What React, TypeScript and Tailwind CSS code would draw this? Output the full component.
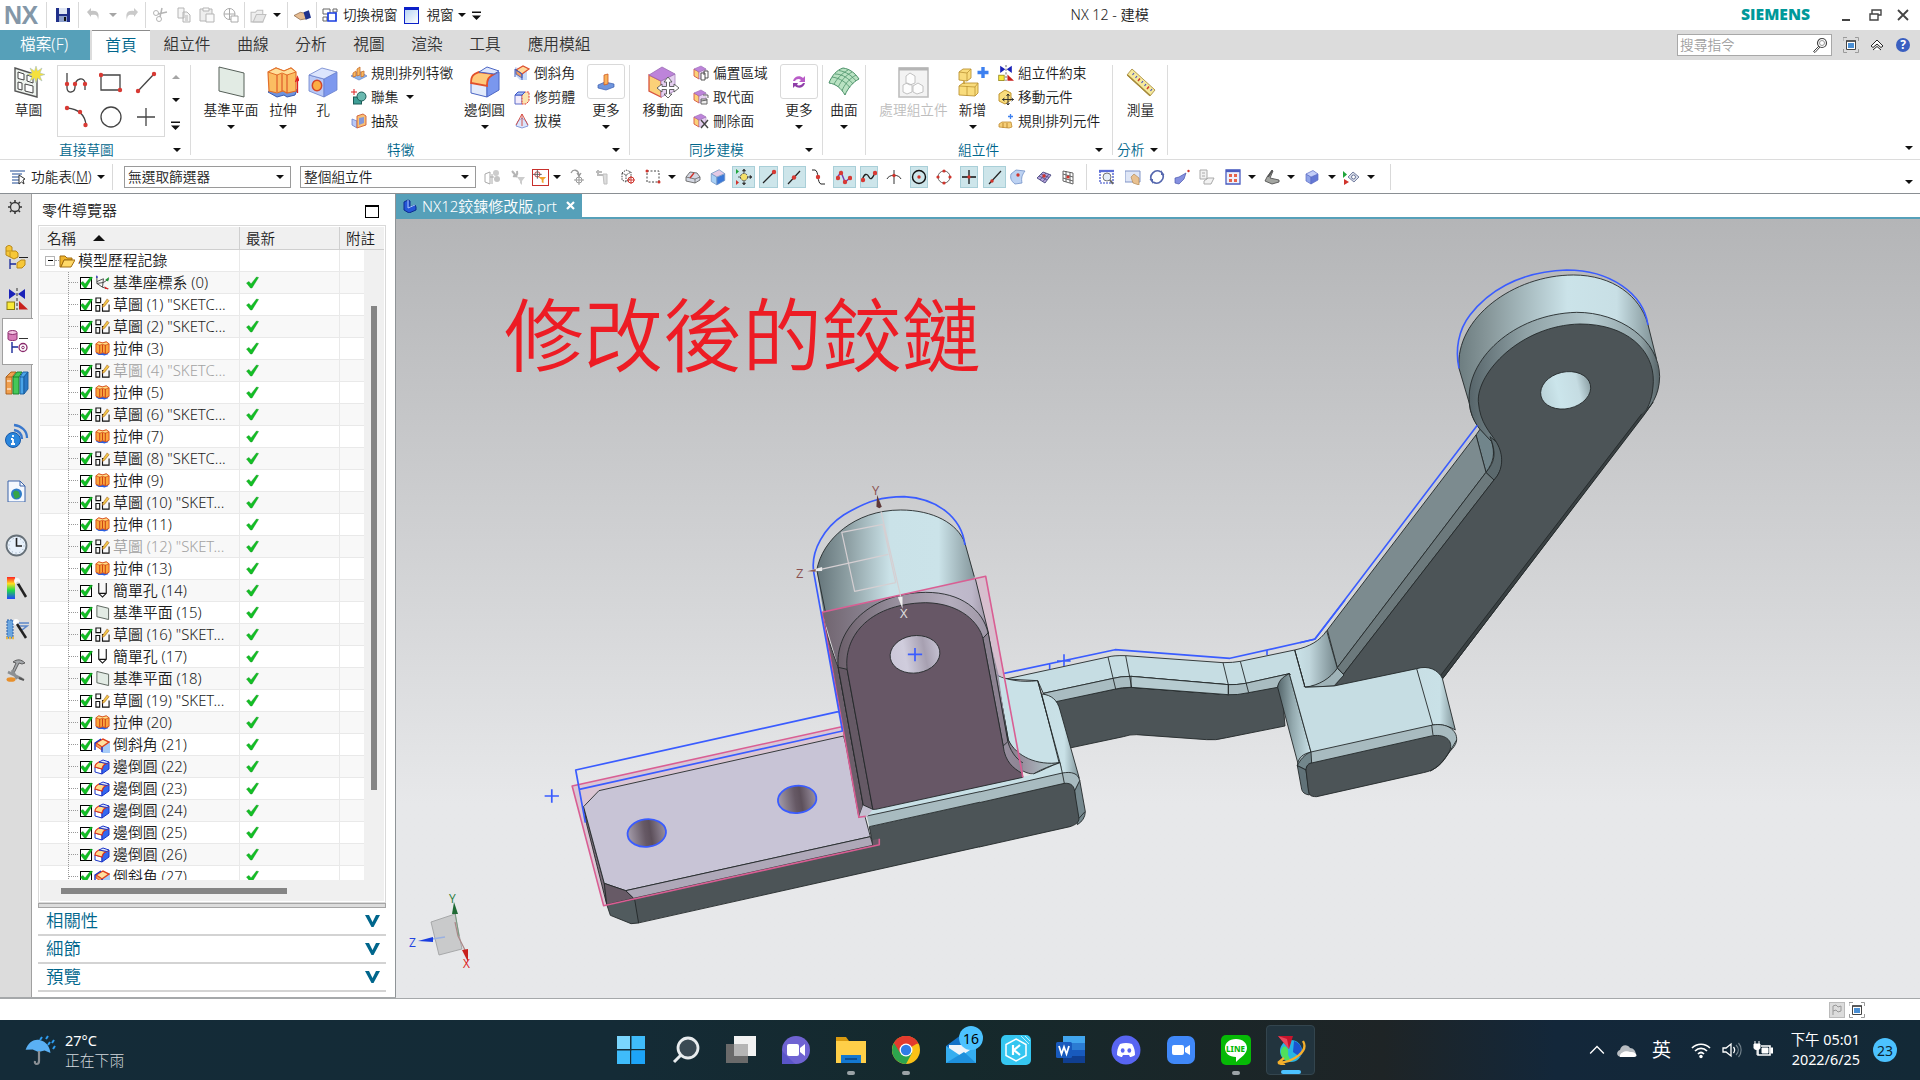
import React from "react";

type Kids = { children?: React.ReactNode };

/* ---------- small helpers ---------- */
const Arrow = ({ c = "#111", up = false }: { c?: string; up?: boolean }) => (
  <svg width="8" height="4" viewBox="0 0 8 4" className="shrink-0"><path d={up ? "M0 4H8L4 0z" : "M0 0H8L4 4z"} fill={c} /></svg>
);
const ArrowBar = () => (
  <svg width="9" height="9" viewBox="0 0 9 9" className="shrink-0"><path d="M0 .5H9V2H0zM0 4.500H9L4.500 9z" fill="#111" /></svg>
);
const Slot = ({ w, children, cls = "" }: Kids & { w: string; cls?: string }) => (
  <div className={`flex h-full shrink-0 items-center justify-center whitespace-nowrap ${w} ${cls}`}>{children}</div>
);
const Ic = ({ s = 16, vb = 16, children }: Kids & { s?: number; vb?: number }) => (
  <svg width={s} height={s} viewBox={`0 0 ${vb} ${vb}`} fill="none" className="shrink-0">{children}</svg>
);
const VSep = () => <div className="h-[26px] w-px bg-[#d9d9d9]" />;

/* ---------- ribbon icons ---------- */
const Cube = ({ s = 16, f = "#f6c944", t = "#ffe58a", r = "#d99c1c", k = "#a87312" }: { s?: number; f?: string; t?: string; r?: string; k?: string }) => (
  <Ic s={s}><path d="M2 5L7 8V15L2 12z" fill={f} stroke={k} strokeWidth=".7" /><path d="M7 8L14 5V11L7 15z" fill={r} stroke={k} strokeWidth=".7" /><path d="M2 5L9 1.500L14 5L7 8z" fill={t} stroke={k} strokeWidth=".7" /></Ic>
);
const SketchBig = () => (
  <Ic s={32} vb={32}>
    <path d="M2 2L24 9V31L2 25z" fill="#eef3ee" stroke="#555" strokeWidth="1.400" />
    <path d="M5 6L11 8V14L5 12.500zM5 16L9 17V24L5 23zM12 18L20 20V27L12 25zM14 9L20 11V17L14 15z" stroke="#444" fill="#fff" />
    <path d="M23 0L24.500 5L29 2L27 7L32 8.500L27 10L29 15L24.500 12L23 17L21.500 12L17 15L19 10L14 8.500L19 7L17 2L21.500 5z" fill="#f5e13c" stroke="#9cb8c4" strokeWidth=".5" />
  </Ic>
);
const PlaneBig = ({ s = 32 }: { s?: number }) => (
  <Ic s={s} vb={32}><path d="M4 1L29 7V31L4 25z" fill="#e2ebe4" stroke="#566059" strokeWidth={s > 20 ? 1 : 2} /></Ic>
);
const Extrude = ({ s = 32 }: { s?: number }) => (
  <Ic s={s} vb={32}>
    <path d="M1 26L10 31L17 29L20 31L28 29L30 24L22 20L8 20z" fill="#6d93e0" stroke="#3a5cb0" />
    <path d="M1 6L9 2L17 5L24 2L29 6V25L20 27L16 25L10 27L2 25z" fill="#fbbd62" stroke="#e2702a" strokeWidth="1.200" />
    <path d="M1 6L9 2L17 5L24 2L29 6L20 9L15 7L10 9z" fill="#ffdf9a" stroke="#e2702a" />
    <path d="M10 9V26M15 8V25M20 9V27" stroke="#dd5326" strokeWidth="1.100" />
    {s > 20 && <path d="M30.500 27V13M28.500 16L30.500 11L32 15" stroke="#d22" strokeWidth="1.300" />}
  </Ic>
);
const HoleBig = () => (
  <Ic s={32} vb={32}>
    <path d="M2 9L17 13V31L2 25z" fill="#b9c9f6" stroke="#6a80cc" strokeWidth=".8" /><path d="M17 13L30 6V24L17 31z" fill="#7d98ee" stroke="#6a80cc" strokeWidth=".8" />
    <path d="M2 9L15 2L30 6L17 13z" fill="#dce5fd" stroke="#6a80cc" strokeWidth=".8" /><ellipse cx="10" cy="19.500" rx="4.700" ry="5.200" fill="#fbae45" stroke="#d4472a" strokeWidth="1.500" />
  </Ic>
);
const EdgeBlend = ({ s = 32 }: { s?: number }) => (
  <Ic s={s} vb={32}>
    <path d="M2 17L18 18V31L2 27z" fill="#e3ebfb" stroke="#4c66c4" /><path d="M18 18L20 11L30 6V24L18 31z" fill="#7a97ee" stroke="#4c66c4" />
    <path d="M2 17C2 9 5 8 10 6L25 8C20 11 18 12 18 20z" fill="#ffc97a" stroke="#e2502a" strokeWidth="1.800" /><path d="M10 6L18 1L30 5L25 8z" fill="#dfe7fc" stroke="#4c66c4" />
  </Ic>
);
const Chamfer = () => (
  <Ic><path d="M1 2L13 6V15L6 15L1 10z" fill="#c8daf8" /><path d="M2 5L9 1L15 4L8 9z" fill="#ffd99a" stroke="#dd5030" strokeWidth="1.200" /><path d="M2 5L8 9V13L2 9z" fill="#ef9a5c" stroke="#4058b8" strokeWidth=".8" /><path d="M1 12V4L8 9V15" stroke="#4058b8" /></Ic>
);
const Trim = () => (
  <Ic><path d="M1 6L8 6V15H1z" fill="#f3ecfb" stroke="#5c6cc8" /><path d="M8 6L11 3H15V12L12 15H8z" fill="#fbe4b0" stroke="#d33" strokeDasharray="2 1" /><path d="M1 6L4 3H11L8 6z" fill="#a9c3f5" stroke="#3c54c8" /></Ic>
);
const Draft = () => (
  <Ic><path d="M4 8L8 5L12 8L14 13L8 15L2 13z" fill="#dbe5fc" stroke="#7288d0" strokeWidth=".8" /><path d="M8 1V13M8 1L2 12M8 1L14 12" stroke="#d2463c" strokeWidth=".9" /></Ic>
);
const PatternFeat = () => (
  <Ic><path d="M0 11L8 6L16 11L8 15z" fill="#8fb4ea" stroke="#5f7fc8" strokeWidth=".7" /><path d="M2 8L5 6V11L2 12zM6 4L9 2V10L6 11zM10 7L13 6V11L10 12z" fill="#f8b860" stroke="#c8702e" strokeWidth=".8" /></Ic>
);
const Unite = () => (
  <Ic><path d="M3 0V6M0 3H6" stroke="#d22" /><rect x="2.500" y="8" width="8" height="7" fill="#3f9f97" stroke="#1c5a56" /><circle cx="10.500" cy="7.500" r="4.500" fill="#69b9b0" stroke="#1c5a56" /></Ic>
);
const Shell = () => (
  <Ic><path d="M1 6L6 8V15L1 12z" fill="#b9c9f6" stroke="#6a80cc" strokeWidth=".8" /><path d="M6 3L12 1L15 3V12L6 15z" fill="#f8bf74" stroke="#cf5d36" strokeWidth=".9" /><path d="M8 5L13 4V10L8 12z" fill="#8497d8" /></Ic>
);
const MoreStamp = () => (
  <Ic s={18} vb={18}><path d="M1 12L8 9L17 11V14L9 17L1 15z" fill="#6f95dc" stroke="#3a5bb0" strokeWidth=".7" /><path d="M7 2L11 1V11L7 12z" fill="#f9b25c" stroke="#cf5b22" strokeWidth=".8" /></Ic>
);
const MoveFace = () => (
  <Ic s={32} vb={32}>
    <path d="M2 9L14 15V31L2 25z" fill="#fbd178" stroke="#d8543e" strokeWidth="1.300" /><path d="M14 15L28 8V25L14 31z" fill="#e5d0f0" stroke="#a884bc" strokeWidth=".8" /><path d="M2 9L15 1L28 8L14 15z" fill="#bd84da" stroke="#9a6cb4" strokeWidth=".8" />
    <path d="M21 11L25 16H22.500V20.500H27V18L32 22L27 26V23.500H22.500V28H25L21 32L17 28H19.500V23.500H15V26L10 22L15 18V20.500H19.500V16H17z" fill="#fff" stroke="#555" strokeWidth=".9" />
  </Ic>
);
const FaceSm = ({ k }: { k: number }) => (
  <Ic><path d="M1 4L6 7V14L1 11z" fill="#fbd178" stroke="#d8543e" strokeWidth=".9" /><path d="M6 7L13 4V11L6 14z" fill="#e5d0f0" stroke="#a884bc" strokeWidth=".6" /><path d="M1 4L8 1L13 4L6 7z" fill="#bd84da" stroke="#9a6cb4" strokeWidth=".6" />
    {k === 0 && <path d="M8 8H12V15H8zM11 10V6H15V13H12" fill="#fff" stroke="#444" strokeWidth=".9" />}
    {k === 1 && <path d="M8 10H14V15H8zM8 12L14 11M10 6H15V9" fill="#eee" stroke="#555" strokeWidth=".9" />}
    {k === 2 && <path d="M8 7L15 15M15 7L8 15" stroke="#444" strokeWidth="1.400" />}
  </Ic>
);
const MoreSync = () => (
  <Ic s={18} vb={18}><path d="M3 8C4 3 10 2 13 5L15 3V9H9L11 7C9 5 6 6 5 8z" fill="#b95cc8" /><path d="M15 10C14 15 8 16 5 13L3 15V10H8L7 12C9 13 12 12 13 10z" fill="#8f3ea8" /></Ic>
);
const Surface = () => (
  <Ic s={32} vb={32}><path d="M1 17C4 9 9 4 15 2C22 3 27 7 31 13C25 16 20 22 17 29C13 22 8 18 1 17z" fill="#b9e2c2" stroke="#4a9068" /><path d="M4 11C12 12 19 17 22 22M7 8C15 8 21 13 25 18M11 4.500C19 6 24 10 28 15M20 4C13 8 9 13 6 18M24 6C17 10 13 15 10.500 20.500M28 9C21 13 16 19 14 25" stroke="#4a9068" strokeWidth=".8" /></Ic>
);
const GrayAsm = () => (
  <Ic s={32} vb={32}><path d="M1 2H30V31H1z" fill="#f3f3f3" stroke="#bdbdbd" strokeWidth="1.600" /><path d="M1 3H30" stroke="#b5b5b5" strokeWidth="3" /><path d="M8 10L12 7L17 10V17L12 19L8 17zM5 19L9 17L14 19V26L9 28L5 26zM15 20L20 17L25 20V26L19 28L15 26z" fill="#fdfdfd" stroke="#bbb" strokeWidth=".9" /></Ic>
);
const AddComp = () => (
  <Ic s={32} vb={32}><path d="M2 6L6 3H14V12L10 15L2 14z" fill="#f9dc7c" stroke="#bd9434" strokeWidth=".9" /><path d="M2 6L10 7L14 3M10 7V15" stroke="#bd9434" strokeWidth=".8" /><path d="M2 20L6 17H21V27L18 30L2 29z" fill="#f9dc7c" stroke="#bd9434" strokeWidth=".9" /><path d="M2 20L18 21L21 17M18 21V30M10 20V30" stroke="#bd9434" strokeWidth=".8" /><path d="M7 15V18" stroke="#c49a30" strokeWidth="1.500" /><path d="M26 1V12M20.500 6.500H31.500" stroke="#3d80f0" strokeWidth="3.400" /></Ic>
);
const Constraint = ({ s = 16 }: { s?: number }) => (
  <Ic s={s} vb={22}><path d="M3 1L10 6L3 11zM19 1L12 6L19 11z" fill="#1a22b8" /><path d="M11 0V22" stroke="#333" strokeDasharray="3 2" /><rect x="1" y="14" width="7.500" height="7.500" fill="#f9ea3a" stroke="#8a7a10" /><path d="M13 13L22 21.500H13z" fill="#c8201c" /></Ic>
);
const MoveComp = () => (
  <Ic><path d="M1 5L7 1L13 4V11L7 15L1 12z" fill="#f9dc7c" stroke="#b98a20" strokeWidth=".9" /><path d="M10 5V16M4.500 10.500H15.500M8.500 7L10 5L11.500 7M13.500 9L15.500 10.500L13.500 12M8.500 14L10 16L11.500 14M6.500 9L4.500 10.500L6.500 12" stroke="#222" strokeWidth=".9" /></Ic>
);
const PatternComp = () => (
  <Ic><path d="M1 11L4 9L13 9L14 14L11 15L1 14z" fill="#f6cf78" stroke="#bf8a30" strokeWidth=".8" /><path d="M5 10V15M9 10V15" stroke="#bf8a30" /><path d="M12.500 1V6M10 3.500H15" stroke="#3d80f0" strokeWidth="1.300" /></Ic>
);
const Ruler = () => (
  <Ic s={30} vb={30}><path d="M6 2L29 23L24 29L1 8z" fill="#f6ea9c" stroke="#b39a50" /><path d="M1.500 8L24 28.500" stroke="#a5893a" strokeWidth="1.600" /><path d="M8 6L6.500 8M11 9L9.500 11M17 14L15.500 16M20 17L18.500 19M26 22L24.500 24" stroke="#4a56c0" strokeWidth="1.200" /><path d="M14 11.500L12 14M23 19.500L21 22" stroke="#d0402e" strokeWidth="1.500" /></Ic>
);

/* ---------- ribbon building blocks ---------- */
const Big = ({ w, icon, label, arrow, gray }: { w: string; icon: React.ReactNode; label: string; arrow?: boolean; gray?: boolean }) => (
  <div className={`flex shrink-0 flex-col items-center ${w}`}>
    <div className="flex h-[33px] items-center">{icon}</div>
    <div className={`mt-[3px] h-[18px] whitespace-nowrap text-[13.700px] leading-[18px] ${gray ? "text-[#bdbdbd]" : ""}`}>{label}</div>
    {arrow && <div className="mt-[6px] flex"><Arrow /></div>}
  </div>
);
const MoreBox = ({ children }: Kids) => (
  <div className="flex h-[35px] w-[38px] items-center justify-center rounded-[3px] border border-[#d9d9d9]">{children}</div>
);
const Row = ({ icon, label, arrow }: { icon: React.ReactNode; label: string; arrow?: boolean }) => (
  <div className="flex h-[24px] items-center gap-[4px] whitespace-nowrap text-[13.700px]">{icon}<span>{label}</span>{arrow && <span className="ml-[4px]"><Arrow /></span>}</div>
);
const Stack = ({ w, children }: Kids & { w: string }) => <div className={`-mt-[4px] flex shrink-0 flex-col ${w}`}>{children}</div>;
const Group = ({ w, label, lp = "", arrow = true, children }: Kids & { w: string; label: string; lp?: string; arrow?: boolean }) => (
  <div className={`mt-[5px] flex h-[90px] shrink-0 flex-col border-r border-[#dcdcdc] ${w}`}>
    <div className="flex h-[76px] shrink-0">{children}</div>
    <div className="flex h-[17px] shrink-0 items-center text-[13.700px] leading-[17px] text-[#00668c]">
      <span className={`whitespace-nowrap ${lp}`}>{label}</span>
      {arrow && <span className="mr-[9px] ml-auto flex"><Arrow /></span>}
    </div>
  </div>
);

/* ---------- title bar ---------- */
const TitleBar = () => (
  <div className="flex h-[30px] items-center text-[13.600px]">
    <div className="w-[46px] pl-[4px] font-['Liberation_Sans'] text-[25px] leading-[30px] font-bold tracking-[-0.500px] text-[#8497a8]">NX</div>
    <VSep />
    <Slot w="w-[31px]"><Ic><path d="M1 1H15V15H1z" fill="#20308a" /><path d="M4 1H12V7H4z" fill="#dfe6f4" /><path d="M4 9H12V15H4z" fill="#8da0cc" /><path d="M9 10H11V14H9z" fill="#111" /></Ic></Slot>
    <VSep />
    <Slot w="w-[30px]"><Ic><path d="M1 5L5 1V4C11 3 14 6 12 13C12 8 10 7 5 8V10z" fill="#c4c4c4" /></Ic></Slot>
    <Slot w="w-[8px]"><Arrow c="#a5a5a5" /></Slot>
    <Slot w="w-[28px]"><Ic><path d="M15 5L11 1V4C5 3 2 6 4 13C4 8 6 7 11 8V10z" fill="#cacaca" /></Ic></Slot>
    <VSep />
    <Slot w="w-[28px]"><Ic><circle cx="4" cy="6" r="2.500" stroke="#b5b5b5" /><circle cx="7" cy="12" r="2.500" stroke="#b5b5b5" /><path d="M6 7L15 5M8 10L10 1" stroke="#b5b5b5" strokeWidth="1.500" /></Ic></Slot>
    <Slot w="w-[20px]"><Ic><path d="M2 1H8V11H2zM7 5H11L14 8V15H7z" fill="#f5f5f5" stroke="#b5b5b5" /><path d="M9 9H12M9 11H12M9 13H12" stroke="#b5b5b5" /></Ic></Slot>
    <Slot w="w-[25px]"><Ic><path d="M1 2H13V14H1z" fill="#eee" stroke="#b5b5b5" /><path d="M4 1H10V4H4zM7 7H15V15H7z" fill="#fafafa" stroke="#b5b5b5" /></Ic></Slot>
    <Slot w="w-[23px]"><Ic><circle cx="6.500" cy="7" r="5.500" stroke="#aaa" /><path d="M6.500 1V13M1 7H12" stroke="#aaa" /><path d="M8 9H15V15H8z" fill="#fff" stroke="#aaa" /></Ic></Slot>
    <Slot w="w-[2px]" />
    <VSep />
    <Slot w="w-[27px]"><Ic s={17}><path d="M1 5H5L7 3H12V14H1z" fill="#eee" stroke="#c0c0c0" /><path d="M3 14L6 7H15L12 14z" fill="#e6e6e6" stroke="#c0c0c0" /></Ic></Slot>
    <Slot w="w-[9px]"><Arrow /></Slot>
    <Slot w="w-[6px]" />
    <VSep />
    <Slot w="w-[28px]"><Ic s={17}><path d="M0 8L6 5L11 6L12 11L6 12L3 10z" fill="#e7bd92" stroke="#7a5536" strokeWidth=".6" /><path d="M9 5L14 3L16 10L11 12z" fill="#20328c" /></Ic></Slot>
    <VSep />
    <Slot w="w-[26px]"><Ic><path d="M1 2H8V7H1zM1 10H5V14H1zM11 2H15V5H11z" stroke="#666" /><path d="M6 6H14V14H6z" fill="#fff" stroke="#1a3ee0" strokeWidth="1.700" /></Ic></Slot>
    <span className="whitespace-nowrap">切換視窗</span>
    <Slot w="w-[29px]"><div className="h-[17px] w-[15px] border border-t-[3px] border-[#0b20c8] bg-linear-to-br from-[#b8d4f4] to-white" /></Slot>
    <span>視窗</span>
    <Slot w="w-[16px]"><Arrow /></Slot>
    <Slot w="w-[13px]"><ArrowBar /></Slot>
    <span className="ml-[588px] text-[14.200px]">NX 12 - 建模</span>
    <span className="ml-auto w-[86px] font-['Open_Sans'] text-[15.700px] font-extrabold text-[#009999]">SIEMENS</span>
    <Slot w="w-[38px]"><div className="mt-[10px] h-[2px] w-[8px] bg-[#444]" /></Slot>
    <Slot w="w-[20px]"><Ic s={13} vb={13}><path d="M3 5V1H12V6H9" stroke="#444" strokeWidth="1.400" /><path d="M1 5H9V11H1z" stroke="#444" strokeWidth="1.400" /></Ic></Slot>
    <Slot w="w-[35px]"><Ic s={12} vb={12}><path d="M1 1L11 11M11 1L1 11" stroke="#444" strokeWidth="1.800" /></Ic></Slot>
  </div>
);

const FullIcon = () => (
  <Ic><path d="M0 4V.5H4M12 .5H15.500V4M15.500 12V15.500H12M4 15.500H.5V12" stroke="#9a9a9a" /><path d="M3.500 4H12.500V12.500H3.500z" fill="#fff" stroke="#444" /><path d="M3 4H13" stroke="#444" strokeWidth="1.500" /><path d="M5 6H11V11H5z" fill="#4a8fd4" /></Ic>
);

const TabBar = () => (
  <div className="flex h-[30px] items-center bg-[#dcdcdc] text-[15.700px] text-[#333]">
    <Slot w="w-[90px]" cls="bg-[#56a0b9] pr-[2px] text-white">檔案(F)</Slot>
    <div className="w-[2px]" />
    <Slot w="w-[58px]" cls="border-t border-[#8c8c8c] bg-white text-[#00668c]">首頁</Slot>
    <Slot w="w-[74px]">組立件</Slot>
    <Slot w="w-[58px]">曲線</Slot><Slot w="w-[58px]">分析</Slot><Slot w="w-[58px]">視圖</Slot><Slot w="w-[58px]">渲染</Slot><Slot w="w-[58px]">工具</Slot>
    <Slot w="w-[90px]">應用模組</Slot>
    <div className="ml-auto flex h-[22px] w-[155px] items-center border border-[#a8a8a8] bg-white pr-[3px] pl-[2px] text-[13.700px] text-[#9f9f9f]">搜尋指令
      <span className="ml-auto"><Ic><circle cx="10" cy="6" r="4.500" stroke="#444" strokeWidth="1.200" /><circle cx="10" cy="6" r="2.500" stroke="#999" /><path d="M7 9L1.500 14.500L3 15.500L8 10" stroke="#444" /></Ic></span>
    </div>
    <Slot w="w-[38px]"><FullIcon /></Slot>
    <Slot w="w-[14px]"><Ic s={14} vb={14}><path d="M1 8L7 2L13 8L11 9.500L7 6L3 9.500zM3 12L7 8.500L11 12" fill="#fff" stroke="#222" /></Ic></Slot>
    <Slot w="w-[36px]" cls="pl-[2px]"><div className="flex size-[14px] items-center justify-center rounded-full bg-[#3a5fc0] text-[12px] leading-[14px] font-bold text-white">?</div></Slot>
  </div>
);

const Dot = ({ x, y }: { x: number; y: number }) => <circle cx={x} cy={y} r="2.200" fill="#d83a34" />;

const Ribbon = () => (
  <div className="flex h-[100px] border-b border-[#dcdcdc]">
    <Group w="w-[191px]" label="直接草圖" lp="ml-[59px]">
      <Big w="w-[57px]" icon={<SketchBig />} label="草圖" />
      <div className="grid h-[72px] w-[108px] shrink-0 grid-cols-3 place-items-center border border-[#d9d9d9] pr-px pb-[2px]">
        <Ic s={24} vb={24}><path d="M3 2V17C3 23 11 22 11 16C11 6 21 6 21 12V19" stroke="#444" strokeWidth="1.300" /><Dot x={3} y={13} /><Dot x={11} y={13} /><Dot x={21} y={13} /></Ic>
        <Ic s={24} vb={24}><path d="M2 4H21V19H2z" stroke="#444" strokeWidth="1.300" /><Dot x={2} y={4} /><Dot x={21} y={19} /></Ic>
        <Ic s={24} vb={24}><path d="M4 20L20 3" stroke="#444" strokeWidth="1.300" /><Dot x={4} y={20} /><Dot x={20} y={3} /></Ic>
        <Ic s={24} vb={24}><path d="M3 3C14 4 21 10 22 20" stroke="#444" strokeWidth="1.300" /><Dot x={3} y={3} /><Dot x={16} y={7} /><Dot x={21.500} y={20} /></Ic>
        <Ic s={24} vb={24}><circle cx="12" cy="12" r="10" stroke="#444" strokeWidth="1.300" /></Ic>
        <Ic s={24} vb={24}><path d="M12 3V21M3 12H21" stroke="#444" strokeWidth="1.300" /></Ic>
      </div>
      <div className="flex w-[21px] flex-col items-center gap-[19px] pt-[10px]"><Arrow c="#a5a5a5" up /><Arrow /><ArrowBar /></div>
    </Group>
    <Group w="w-[439px]" label="特徵" lp="ml-[196px]">
      <Big w="w-[80px]" icon={<PlaneBig />} label="基準平面" arrow />
      <Big w="w-[24px]" icon={<Extrude />} label="拉伸" arrow />
      <Big w="w-[56px]" icon={<HoleBig />} label="孔" />
      <Stack w="w-[104px]"><Row icon={<PatternFeat />} label="規則排列特徵" /><Row icon={<Unite />} label="聯集" arrow /><Row icon={<Shell />} label="抽殼" /></Stack>
      <Big w="w-[59px]" icon={<EdgeBlend />} label="邊倒圓" arrow />
      <Stack w="w-[72px]"><Row icon={<Chamfer />} label="倒斜角" /><Row icon={<Trim />} label="修剪體" /><Row icon={<Draft />} label="拔模" /></Stack>
      <Big w="w-[40px]" icon={<MoreBox><MoreStamp /></MoreBox>} label="更多" arrow />
    </Group>
    <Group w="w-[193px]" label="同步建模" lp="ml-[59px]">
      <Big w="w-[66px]" icon={<MoveFace />} label="移動面" />
      <Stack w="-ml-[3px] w-[86px]"><Row icon={<FaceSm k={0} />} label="偏置區域" /><Row icon={<FaceSm k={1} />} label="取代面" /><Row icon={<FaceSm k={2} />} label="刪除面" /></Stack>
      <Big w="w-[40px]" icon={<MoreBox><MoreSync /></MoreBox>} label="更多" arrow />
    </Group>
    <Group w="w-[43px]" label="" arrow={false}><Big w="w-[42px]" icon={<Surface />} label="曲面" arrow /></Group>
    <Group w="w-[247px]" label="組立件" lp="ml-[92px]">
      <Big w="w-[95px]" icon={<GrayAsm />} label="處理組立件" gray />
      <Big w="w-[23px]" icon={<AddComp />} label="新增" arrow />
      <Stack w="w-[110px] ml-[14px]"><Row icon={<Constraint />} label="組立件約束" /><Row icon={<MoveComp />} label="移動元件" /><Row icon={<PatternComp />} label="規則排列元件" /></Stack>
    </Group>
    <Group w="w-[55px]" label="分析" lp="ml-[4px]"><Big w="w-[55px]" icon={<Ruler />} label="測量" /></Group>
    <div className="mt-[86px] mr-[7px] ml-auto"><Arrow /></div>
  </div>
);

/* ---------- selection bar ---------- */
const On = ({ children }: Kids) => <div className="flex h-[22px] w-[23px] items-center justify-center border border-[#a9cfd8] bg-[#cde5ea]">{children}</div>;
const r = "#d0342c";
const SelBar = () => (
  <div className="flex h-[34px] items-center border-b border-[#8a8f93] pt-[1px] text-[13.700px]">
    <Slot w="w-[31px]" cls="pl-[4px]"><Ic><path d="M0 2H15M2 5H12M2 8H9M2 11H9M2 14H9" stroke="#6a86b8" strokeWidth="1.400" /><path d="M9 6V15L11.500 13L14 15L13 11L15 10z" fill="#fff" stroke="#333" /></Ic></Slot>
    <span className="w-[63px] whitespace-nowrap">功能表(<u>M</u>)</span>
    <Slot w="w-[14px]"><Arrow /></Slot><Slot w="w-[4px]" />
    <VSep />
    {["無選取篩選器", "整個組立件"].map((t, i) => (
      <div key={t} className={`flex h-[22px] shrink-0 items-center border border-[#9a9a9a] pr-[6px] pl-[3px] ${i ? "ml-[9px] w-[176px]" : "ml-[11px] w-[167px]"}`}>{t}<span className="ml-auto"><Arrow /></span></div>
    ))}
    <Slot w="w-[29px]" cls="pl-[2px]"><Ic><path d="M1 5L6 3V15L1 13zM6 8H10M8 5V15" stroke="#aaa" /><circle cx="12" cy="4" r="3" fill="#ccc" /><circle cx="13" cy="10" r="3" fill="#c4c4c4" /></Ic></Slot>
    <Slot w="w-[26px]"><Ic><path d="M2 2L7 8M7 2C8 6 6 8 3 7" stroke="#b5b5b5" strokeWidth="2" /><path d="M7 8H15L12 12V16L10 14V12z" fill="#ccc" /></Ic></Slot>
    <Slot w="w-[18px]"><div className="flex size-[17px] items-center justify-center border border-[#c8302c]"><Ic s={14}><circle cx="5" cy="5" r="3" stroke="#b33" /><path d="M5 0V10M0 5H10" stroke="#555" /><path d="M6 8H15L12 11V15L10 14V11z" fill="#f2a32c" /></Ic></div></Slot>
    <Slot w="w-[16px]"><Arrow /></Slot>
    <Slot w="w-[26px]"><Ic><path d="M1 4C3 0 8 0 9 6M7 4L9 7L11 4" stroke="#999" strokeWidth="1.300" /><circle cx="9" cy="11" r="3" stroke="#999" /><path d="M9 6V16M4 11H14" stroke="#999" /></Ic></Slot>
    <Slot w="w-[24px]"><Ic><path d="M1 3H7M3 1V6H8" stroke="#bbb" strokeWidth="2" /><path d="M8 5H12V15H9z" fill="#ddd" stroke="#c0c0c0" /></Ic></Slot>
    <Slot w="w-[26px]"><Ic><path d="M2 4L6 1L11 3V9L6 13L2 11zM2 4L6 6L11 3M6 6V13" stroke="#444" strokeDasharray="1.500 1" /><circle cx="11" cy="11" r="3" stroke={r} /><path d="M11 7V15M7 11H15" stroke={r} strokeWidth=".9" /></Ic></Slot>
    <Slot w="w-[24px]"><Ic><path d="M2 2H14V13H2z" stroke="#444" strokeDasharray="2 1.500" /><circle cx="2" cy="2" r="1.500" fill={r} /><circle cx="14" cy="13" r="1.500" fill={r} /></Ic></Slot>
    <Slot w="w-[13px]"><Arrow /></Slot>
    <Slot w="w-[30px]"><Ic><path d="M1 8L5 3L12 4L15 8V11L10 14L1 12z" fill="#d3d7e2" stroke="#666" strokeWidth=".9" /><path d="M1 8L10 10L15 8M10 10V14" stroke="#666" strokeWidth=".8" /><path d="M9 4L5 9" stroke={r} strokeWidth="1.400" /></Ic></Slot>
    <Slot w="w-[20px]"><Cube f="#a9d0f4" t="#e3c9e4" r="#3a78d8" k="#7496c4" s={18} /></Slot>
    <Slot w="w-[31px]"><On><Ic><path d="M8 1V15M2 8H15M8 0L6.500 2H9.500zM8 16L6.500 14H9.500zM16 8L14 6.500V9.500z" stroke="#333" strokeWidth=".8" fill="#333" /><circle cx="8" cy="8" r="3.600" fill="#f4e06a" stroke="#555" strokeDasharray="2 1" /><path d="M0 0V5L3 2.500z" fill="#1fa53a" /><path d="M0 11V16L3 13.500z" fill={r} /></Ic></On></Slot>
    <Slot w="w-[19px]"><On><Ic><path d="M2 14L13 3" stroke="#222" strokeWidth="1.200" /><Dot x={13} y={3} /></Ic></On></Slot>
    <Slot w="w-[32px]"><On><Ic><path d="M2 15L14 2" stroke="#222" strokeWidth="1.200" /><Dot x={8} y={8.5} /></Ic></On></Slot>
    <Slot w="w-[17px]"><Ic><path d="M1 1H4C8 2 6 14 10 15H14" stroke="#222" /><Dot x={7} y={8} /></Ic></Slot>
    <Slot w="w-[34px]"><On><Ic><path d="M1 9L5 3L9 13L14 9" stroke="#7a3ab0" strokeWidth="1.400" /><Dot x={5} y={4} /><Dot x={9} y={13} /><Dot x={14} y={9} /><Dot x={2} y={9} /></Ic></On></Slot>
    <Slot w="w-[15px]"><On><Ic><path d="M1 12C3 4 6 4 8 8S12 8 14 4" stroke="#222" strokeWidth="1.400" /><Dot x={2} y={11} /><Dot x={14} y={4} /></Ic></On></Slot>
    <Slot w="w-[35px]"><Ic><path d="M8 1V15M1 10C3 5 13 5 15 10" stroke="#333" /><circle cx="8" cy="6.500" r="1.700" fill={r} /></Ic></Slot>
    <Slot w="w-[15px]"><On><Ic><circle cx="8" cy="8" r="6.500" stroke="#111" strokeWidth="1.400" /><circle cx="8" cy="8" r="1.700" fill={r} /></Ic></On></Slot>
    <Slot w="w-[36px]"><Ic><circle cx="8" cy="8" r="6" stroke="#666" /><circle cx="8" cy="2" r="1.600" fill={r} /><circle cx="8" cy="14" r="1.600" fill={r} /><circle cx="2" cy="8" r="1.600" fill={r} /><circle cx="14" cy="8" r="1.600" fill={r} /></Ic></Slot>
    <Slot w="w-[14px]"><On><Ic><path d="M8 1V15M1 8H15" stroke="#111" strokeWidth="1.300" /><circle cx="8" cy="8" r="1.700" fill={r} /></Ic></On></Slot>
    <Slot w="w-[37px]"><On><Ic><path d="M2 15L14 2" stroke="#222" strokeWidth="1.200" /><circle cx="5" cy="12" r="1.700" fill={r} /></Ic></On></Slot>
    <Slot w="w-[10px]"><Ic><path d="M1 5L6 1L15 2C12 6 11 9 12 14L5 15C1 12 0 9 1 5z" fill="#bdd2f2" stroke="#7c98cc" strokeWidth=".9" /><circle cx="8" cy="6" r="1.700" fill={r} /></Ic></Slot>
    <Slot w="w-[41px]"><Ic><path d="M1 9L7 3L15 6L9 14z" fill="#b6a3dc" stroke="#4a4a80" strokeWidth=".9" /><path d="M3 7L11 11M5 5L13 8.500M4 11L10 4M7 12.500L13 5" stroke="#4a4a80" strokeWidth=".8" /><circle cx="8" cy="7" r="1.700" fill={r} /></Ic></Slot>
    <Slot w="w-[8px]"><Ic><path d="M3 2L13 4V15L3 12zM6 2V13M10 3V14M3 5L13 8M3 9L13 12" stroke="#555" strokeWidth=".9" /><circle cx="8" cy="8" r="1.600" fill={r} /></Ic></Slot>
    <Slot w="w-[14px]" />
    <VSep />
    <Slot w="w-[40px]"><Ic><path d="M1 2H14V14H1z" stroke="#3346c8" strokeWidth="1.200" strokeDasharray="2 1" /><path d="M0 2H15" stroke="#5a6cd8" strokeWidth="2.300" /><circle cx="8" cy="8" r="4" fill="#e6eef8" stroke="#777" /><path d="M11 11L14 15" stroke="#666" strokeWidth="2" /></Ic></Slot>
    <Slot w="w-[12px]"><Ic><path d="M0 2H15V13H0z" fill="#dfe6f6" stroke="#8195c8" /><path d="M6 8L9 5L14 9V16L8 14z" fill="#e9c190" stroke="#a97f48" strokeWidth=".6" /></Ic></Slot>
    <Slot w="w-[36px]"><Ic><path d="M3 12A6.500 6.500 0 0 1 12 3M13 4A6.500 6.500 0 0 1 4 13" stroke="#5567ae" strokeWidth="1.600" /><path d="M12 1V6L15.500 6zM4 15V10L.5 10z" fill="#5567ae" /></Ic></Slot>
    <Slot w="w-[14px]"><Ic><path d="M1 9L5 8L12 4L10 10L5 15L1 14z" fill="#8590e0" stroke="#4c58ac" strokeWidth=".7" /><circle cx="14.500" cy="2" r="1.200" fill={r} /></Ic></Slot>
    <Slot w="w-[36px]"><Ic><path d="M1 1H8V10H1zM5 12L9 9H15L12 15H5z" fill="#f2f2f2" stroke="#aaa" /><path d="M3 4H6M3 7H6" stroke="#aaa" /></Ic></Slot>
    <Slot w="w-[16px]"><Ic><path d="M1 1H15V15H1z" fill="#eef1fb" stroke="#4a5cc0" strokeWidth="1.300" /><path d="M1 2H15" stroke="#4a5cc0" strokeWidth="2.300" /><path d="M4 5H7V8H4zM9 5H12V8H9zM4 10H7V13H4zM9 10H12V13H9z" fill="#e5634c" /></Ic></Slot>
    <Slot w="w-[22px]"><Arrow /></Slot>
    <Slot w="w-[17px]"><Ic><path d="M3 8L8 1L9 2L6 9L15 11V13L8 15L1 12z" fill="#a3a5a1" stroke="#555" strokeWidth=".9" /><path d="M3 8L8 1L9 2L5 8z" fill="#555" /></Ic></Slot>
    <Slot w="w-[21px]"><Arrow /></Slot>
    <Slot w="w-[22px]"><Cube f="#8fa4e8" t="#c3cef8" r="#6478d4" k="#5c6cc4" /></Slot>
    <Slot w="w-[17px]"><Arrow /></Slot>
    <Slot w="w-[22px]"><Ic><path d="M0 2V9L4 5.500z" fill="#1fa53a" /><path d="M1 10V16L6 13z" fill={r} /><path d="M5 8L10 3L16 8L11 13z" fill="#d8dde8" stroke="#6a7498" strokeWidth=".9" /><circle cx="10.500" cy="8" r="2" fill="#fff" stroke="#6a7498" /></Ic></Slot>
    <Slot w="w-[17px]"><Arrow /></Slot>
    <Slot w="w-[11px]" /><VSep />
    <div className="mt-[10px] mr-[7px] ml-auto"><Arrow /></div>
  </div>
);

/* ---------- resource bar ---------- */
const ResourceBar = () => (
  <div className="flex w-[32px] flex-col items-center border-r border-[#a0a0a0] bg-[#dcdcdc] pl-[2px] [&>svg]:shrink-0">
    <div className="flex h-[40px] items-center pr-[3px] pb-[14px]"><Ic s={14} vb={14}><circle cx="7" cy="7" r="4.500" stroke="#333" strokeWidth="1.300" /><path d="M7 0V2M7 12V14M0 7H2M12 7H14M2 2L3.500 3.500M10.500 10.500L12 12M12 2L10.500 3.500M2 12L3.500 10.500" stroke="#333" strokeWidth="1.500" /></Ic></div>
    <div className="flex h-[46px] items-center"><Ic s={24} vb={24}><path d="M1 2L4 0L7 2V6L11 6L13 8V12L9 14L5 12L1 10z" fill="#f6c738" stroke="#b88818" /><path d="M1 6L7 6M5 7V12" stroke="#b88818" strokeWidth=".8" /><path d="M5 14V24M5 19H11" stroke="#1a2a9a" strokeWidth="1.300" /><path d="M14 12.500H23" stroke="#222" /><path d="M12 18L16 15H20V20L17 23H12z" fill="#f6c738" stroke="#b88818" /></Ic></div>
    <div className="flex h-[38px] items-center"><Constraint s={22} /></div>
    <div className="-mr-px flex h-[47px] w-[31px] shrink-0 items-center justify-center border border-r-0 border-[#a0a0a0] bg-white pb-[2px]"><Ic s={24} vb={24}><path d="M2 4V10C2 12 11 12 11 10V4z" fill="#d77cb8" stroke="#8a2a6c" /><ellipse cx="6.500" cy="3.500" rx="4.500" ry="2" fill="#f3c4e2" stroke="#8a2a6c" /><path d="M6 13V24M6 18H12" stroke="#1a2a9a" strokeWidth="1.400" /><path d="M13 9.500H22" stroke="#333" /><circle cx="17" cy="18.500" r="4" fill="#fff" stroke="#8a2a6c" strokeWidth="1.300" /><circle cx="17" cy="18.500" r="1.300" stroke="#8a2a6c" /></Ic></div>
    <div className="flex h-[36px] items-center"><Ic s={24} vb={24}><path d="M1 6H7V23H1zM1 6L6 1H11L7 6" fill="#f0a050" stroke="#a85a14" strokeWidth=".9" /><path d="M8 6H14V23H8zM8 6L12 1H17L14 6" fill="#45c858" stroke="#157a24" strokeWidth=".9" /><path d="M15 6H19V23H15zM15 6L18 1H23L19 6" fill="#4aa4e8" stroke="#165c9c" strokeWidth=".9" /><path d="M19 6L23 1V18L19 23z" fill="#2a78c4" stroke="#165c9c" strokeWidth=".9" /><path d="M2 10H6M2 18H6" stroke="#fff" /></Ic></div>
    <div className="flex h-[69px] items-center"><Ic s={25} vb={25}><circle cx="9" cy="17" r="7.500" fill="#2a86dc" stroke="#1658a8" /><path d="M9 12V14M9 16V21M7 21H11M7 16H9" stroke="#fff" strokeWidth="1.800" /><path d="M10 7C15 8 18 11 18 16M10 2C18 3 23 8 23 15" stroke="#3a78cc" strokeWidth="2.300" /></Ic></div>
    <div className="flex h-[42px] items-center"><Ic s={22} vb={22}><path d="M2 1H14L19 6V22H2z" fill="#f4f8fe" stroke="#3a62a8" /><path d="M14 1V6H19" stroke="#3a62a8" /><circle cx="10.500" cy="14" r="5.500" fill="#2f7cc8" /><path d="M7 13C9 9 11 11 13 12L14 17L9 19z" fill="#36a548" /></Ic></div>
    <div className="flex h-[66px] items-center"><Ic s={23} vb={23}><circle cx="11.500" cy="11.500" r="10" fill="#e8f1fb" stroke="#667078" strokeWidth="1.800" /><circle cx="11.500" cy="11.500" r="7.500" stroke="#8aa0b8" strokeDasharray="1 2.900" /><path d="M11.500 4V12H17" stroke="#222" strokeWidth="1.600" /></Ic></div>
    <div className="flex h-[20px] items-center"><svg width="22" height="24" viewBox="0 0 22 24"><defs><linearGradient id="rb" x1="0" y1="0" x2="0" y2="1"><stop offset="0" stopColor="#f22" /><stop offset=".3" stopColor="#fd2" /><stop offset=".6" stopColor="#2d4" /><stop offset="1" stopColor="#24f" /></linearGradient></defs><path d="M1 1H9V23H1z" fill="url(#rb)" /><path d="M11 6L20 21" stroke="#222" strokeWidth="2.500" /><circle cx="11" cy="5" r="3" fill="#fff" opacity=".8" /></svg></div>
    <div className="mt-[20px] flex h-[24px] items-center"><Ic s={24} vb={24}><path d="M2 2H8V20H2z" fill="#6aa6e0" stroke="#2a5fa8" strokeDasharray="2 1" /><path d="M11 5H24M13 8H22L17 12" stroke="#5c86c8" strokeWidth="1.600" /><circle cx="11" cy="4" r="3" fill="#fff" opacity=".9" /><path d="M12 6L21 20" stroke="#222" strokeWidth="2.500" /><path d="M1 20H9" stroke="#e8b848" strokeWidth="2.500" strokeDasharray="2 1" /></Ic></div>
    <div className="mt-[17px] flex h-[24px] items-center"><Ic s={24} vb={24}><path d="M8 3C12 0 16 0 20 4L17 5L14 4L9 14L7 13L11 4z" fill="#a4a7aa" stroke="#555" strokeWidth=".9" /><path d="M3 13L17 20M7 11L12 20" stroke="#8c8f92" strokeWidth="2.600" /><path d="M14 19L19 21" stroke="#555" strokeWidth="2" /><ellipse cx="6" cy="20.500" rx="4.500" ry="2.300" fill="#e8902c" /></Ic></div>
  </div>
);

/* ---------- part navigator ---------- */
type K = "csys" | "sk" | "ex" | "hole" | "pl" | "ch" | "bl";
const rows: [K, string, boolean?][] = [
  ["csys", "基準座標系 (0)"], ["sk", '草圖 (1) "SKETC...'], ["sk", '草圖 (2) "SKETC...'], ["ex", "拉伸 (3)"], ["sk", '草圖 (4) "SKETC...', true],
  ["ex", "拉伸 (5)"], ["sk", '草圖 (6) "SKETC...'], ["ex", "拉伸 (7)"], ["sk", '草圖 (8) "SKETC...'], ["ex", "拉伸 (9)"], ["sk", '草圖 (10) "SKET...'],
  ["ex", "拉伸 (11)"], ["sk", '草圖 (12) "SKET...', true], ["ex", "拉伸 (13)"], ["hole", "簡單孔 (14)"], ["pl", "基準平面 (15)"], ["sk", '草圖 (16) "SKET...'],
  ["hole", "簡單孔 (17)"], ["pl", "基準平面 (18)"], ["sk", '草圖 (19) "SKET...'], ["ex", "拉伸 (20)"], ["ch", "倒斜角 (21)"], ["bl", "邊倒圓 (22)"],
  ["bl", "邊倒圓 (23)"], ["bl", "邊倒圓 (24)"], ["bl", "邊倒圓 (25)"], ["bl", "邊倒圓 (26)"], ["ch", "倒斜角 (27)"],
];
const TreeIcon = ({ k }: { k: K }) => {
  if (k === "ex") return <Ic s={15}><path d="M1 13L4 15H8L10 15.500L14 14V11H2z" fill="#2a5fe0" /><path d="M1 3L4 1L8 2L12 1L15 3V12L12 13.500L8 12.500L5 13.500L1 12z" fill="#fba63c" stroke="#d8501c" /><path d="M1 3L4 1L8 2L12 1L15 3L11 4.500L8 3.500L5 4.500z" fill="#ffe08a" stroke="#d8501c" strokeWidth=".8" /><path d="M5 4V13M8 4V12M11 4V13" stroke="#c83c14" /></Ic>;
  if (k === "bl") return <Ic s={16}><path d="M1 8L8 10V15L1 13z" fill="#fff" stroke="#1a34c8" /><path d="M8 10L10 6L15 3V10L8 15z" fill="#3468f0" stroke="#1a34c8" /><path d="M1 8C1 5 3 4 5 3L13 4.500C10 5.500 9 6 8 10z" fill="#ffdc8c" stroke="#e0361c" strokeWidth="1.200" /><path d="M5 3L9 1L15 3L13 4.500z" fill="#dfe9ff" stroke="#1a34c8" /></Ic>;
  if (k === "ch") return <Ic s={16}><path d="M5 8L16 4V16H8z" fill="#a8ccf8" /><path d="M2 6L9 2L15 5L8 10z" fill="#ffe0a0" stroke="#e0401c" strokeWidth="1.400" /><path d="M2 6L8 10V13L2 9z" fill="#f0a060" stroke="#e0401c" strokeWidth=".9" /><path d="M1 13V6L7 2M8 10V15" stroke="#1a34c8" strokeWidth="1.400" /></Ic>;
  if (k === "pl") return <PlaneBig s={15} />;
  if (k === "hole") return <Ic s={15}><path d="M4 0V11L8 15L12 11V0M4 11H12" stroke="#111" strokeWidth="1.200" /></Ic>;
  if (k === "csys") return <Ic s={15}><path d="M2 1V9L8 13L9 4L2 7M8 13L14 15M9 8L15 4M2 9L9 8" stroke="#333" strokeWidth=".9" /><path d="M11 5L15 2L14 7z" fill="#1f9a34" /><path d="M10 12L15 15L11 15z" fill="#d22" /><path d="M1 3L2 0L3 3z" fill="#22c" /></Ic>;
  return <Ic s={15}><path d="M1 1H6V6H1zM1 9H5V15H1zM11 8H8V15H15V8" stroke="#111" strokeWidth="1.200" /><path d="M8 9L13 2L15 4L10 10L8 11z" fill="#f2c848" stroke="#a05a20" strokeWidth=".6" /></Ic>;
};
const Check = () => <Ic s={13} vb={13}><path d="M.5 7L3 5.500L5 8L10.500 1L12.500 1.500L6 12H4.500z" fill="#12c024" stroke="#0c8c18" strokeWidth=".4" /></Ic>;

const Navigator = () => (
  <div className="flex w-[363px] shrink-0 flex-col pr-[9px] pl-[6px]">
    <div className="flex h-[31px] items-center pt-[2px] pr-[7px] pl-[4px] text-[15px]">零件導覽器<div className="mt-px ml-auto h-[13px] w-[14px] border border-t-2 border-black" /></div>
    <div className="flex h-[678px] flex-col border border-[#d9d9d9] p-px">
      <div className="flex h-[23px] shrink-0 border-b border-[#cfcfcf] bg-[#f0f0f0] text-[14.500px] leading-[23px]">
        <div className="flex w-[200px] items-center border-r border-[#cfcfcf] pl-[7px]">名稱<span className="ml-[17px]"><svg width="12" height="6" viewBox="0 0 12 6"><path d="M0 6H12L6 0z" fill="#111" /></svg></span></div>
        <div className="w-[100px] border-r border-[#cfcfcf] pl-[6px]">最新</div>
        <div className="pl-[6px]">附註</div>
      </div>
      <div className="flex h-[630px] shrink-0">
        <div className="w-[324px] overflow-hidden text-[14.900px]">
          <div className="flex h-[22px] border-b border-[#e9e9e9]">
            <div className="flex w-[200px] items-center border-r border-[#e9e9e9] pl-[5px]">
              <div className="flex size-[10px] items-center justify-center border border-[#b5b5b5]"><div className="h-px w-[5px] bg-black" /></div>
              <div className="w-[4px] border-t border-dotted border-[#999]" />
              <Ic s={16}><path d="M1 3H6L8 5H13V7H5L2 14H1z" fill="#f0b52c" stroke="#a06c10" /><path d="M5 7H16L12 14H2z" fill="#ffd968" stroke="#a06c10" /></Ic>
              <span className="ml-[3px] leading-[21px]">模型歷程記錄</span>
            </div>
            <div className="w-[100px] border-r border-[#e9e9e9]" />
          </div>
          {rows.map(([k, t, gray], i) => (
            <div key={i} className={`flex h-[22px] border-b border-[#e9e9e9] ${i % 2 ? "bg-white" : "bg-[#f8f8f8]"}`}>
              <div className="flex w-[200px] items-center border-r border-[#e9e9e9] pl-[28px]">
                <div className="flex h-full w-[12px] shrink-0 items-center border-l border-dotted border-[#999]"><div className="w-[9px] border-t border-dotted border-[#999]" /></div>
                <div className="flex size-[12px] shrink-0 items-center justify-center border border-black bg-white"><Check /></div>
                <div className="ml-[2px] flex w-[16px] shrink-0 justify-center"><TreeIcon k={k} /></div>
                <span className={`ml-[3px] leading-[21px] whitespace-nowrap ${gray ? "text-[#a3a3a3]" : ""}`}>{t}</span>
              </div>
              <div className="flex w-[100px] items-center border-r border-[#e9e9e9] pl-[6px]"><Check /></div>
            </div>
          ))}
        </div>
        <div className="flex flex-1 justify-center bg-[#f0f0f0] pt-[56px]"><div className="mr-px h-[484px] w-[6px] bg-[#858585]" /></div>
      </div>
      <div className="flex-1 bg-[#f0f0f0] pt-[8px] pl-[21px]"><div className="h-[6px] w-[226px] bg-[#858585]" /></div>
    </div>
    <div className="h-[5px] border border-[#a5a5a5] bg-[#dcdcdc]" />
    {["相關性", "細節", "預覽"].map((t) => (
      <div key={t} className="flex h-[28px] items-center border-b-2 border-[#d3d3d3] pr-[6px] pl-[8px] text-[17.400px] leading-[24px] text-[#00668c]"><span className="-mt-[2px]">{t}</span>
        <span className="ml-auto"><svg width="15" height="12" viewBox="0 0 15 12"><path d="M0 0H4L7.500 7L11 0H15L8.500 12H6.500z" fill="#00668c" /></svg></span></div>
    ))}
  </div>
);

/* ---------- 3D model ---------- */
const Stops = ({ id, s, v }: { id: string; s: [number, string][]; v?: boolean }) => (
  <linearGradient id={id} x1="0" y1="0" x2={v ? "0" : "1"} y2={v ? "1" : "0"}>{s.map(([o, c]) => <stop key={o} offset={o} stopColor={c} />)}</linearGradient>
);
const Model = () => (
  <svg width="1524" height="779" viewBox="396 219 1524 779" fill="none" className="block [&_*]:[vector-effect:non-scaling-stroke]">
    <defs>
      <Stops id="cylR" s={[[0, "#6d7d80"], [0.15, "#87979a"], [0.55, "#cbe3e9"], [0.8, "#c8dfe5"], [1, "#7b8d91"]]} />
      <Stops id="chR" s={[[0, "#57656a"], [0.3, "#90a2a6"], [0.65, "#b4c9ce"], [0.9, "#8fa1a5"], [1, "#566367"]]} />
      <Stops id="cylL" s={[[0, "#65757a"], [0.2, "#8fa1a5"], [0.45, "#cae2e8"], [0.75, "#cbe3e9"], [1, "#7c8d92"]]} />
      <Stops id="cylP" s={[[0, "#70646f"], [0.3, "#8c8593"], [0.6, "#c5c0d1"], [0.9, "#bdb7c9"], [1, "#9a91a2"]]} />
      <Stops id="bandP" s={[[0, "#6b5f6a"], [0.3, "#958d9b"], [0.6, "#b4adbd"], [1, "#8c8392"]]} />
      <Stops id="bore" s={[[0, "#a59dab"], [0.45, "#665965"], [0.6, "#5d505b"], [1, "#9a90a0"]]} />
      <Stops id="boreP" s={[[0, "#cbc7d8"], [0.3, "#d0cddd"], [0.7, "#a7a0b1"], [1, "#c5c1d2"]]} />
      <Stops id="boreR" s={[[0, "#b9d1d7"], [0.35, "#cbe5eb"], [0.75, "#c5dce2"], [1, "#8da1a6"]]} />
      <Stops id="fil" s={[[0, "#cbe3e9"], [0.35, "#c0d6dc"], [1, "#74868b"]]} />
      <Stops id="side" s={[[0, "#54656a"], [0.45, "#93a9ae"], [1, "#cbe3e9"]]} />
      <Stops id="rnd" s={[[0, "#c8dfe5"], [0.6, "#c9e1e7"], [1, "#7e9297"]]} />
      <Stops id="foot" s={[[0, "#766a78"], [0.45, "#9b94a2"], [0.8, "#a9bcc1"], [1, "#c2d9df"]]} />
    </defs>

    {/* long arm */}
    <g transform="translate(1300 240) scale(.33333)" stroke="#24292a" strokeWidth=".9" strokeLinejoin="round">
      <path d="M508 490L477 385C465 235 640 105 820 105C940 105 1020 170 1043 250L1069 355L900 600L575 610C545 570 512 545 508 490z" fill="url(#cylR)" />
      <path d="M508 490C495 360 640 222 830 217C960 217 1078 300 1079 410C1078 470 1050 500 1030 525L800 700L590 700L575 605C545 575 515 550 508 490z" fill="url(#chR)" />
      <path d="M540 568L575 605C585 640 582 665 558 697L528 585z" fill="#71858b" />
      <path d="M528 585L558 697L112 1283L82 1170z" fill="#7c8b8f" />
      <path d="M558 697L582 720L130 1303L112 1283z" fill="#6c797c" />
      <path d="M570 590C590 640 585 665 558 697L582 720C610 690 615 650 592 608z" fill="#5b696d" />
      <path d="M535 485C530 400 660 256 840 252C980 252 1062 330 1060 425C1058 470 1050 495 1028 528L428 1316L105 1338L130 1303L582 720C610 690 612 645 590 608C570 575 540 550 535 485z" fill="#4c5457" />
      <path d="M1060 486L1030 528L428 1316L422 1306L1025 522" fill="#3a4143" />
      <ellipse cx="797" cy="451" rx="76" ry="55" transform="rotate(-13 797 451)" fill="url(#boreR)" />
      <g stroke="#3a5cff" strokeWidth="1.600"><path d="M477 385C465 330 475 270 510 225C560 160 650 95 800 90C930 90 1030 160 1044 255" /><path d="M532 556L45 1197L0 1208" /></g>
    </g>

    {/* link and block */}
    <g transform="translate(980 600) scale(.33333)" stroke="#24292a" strokeWidth=".9" strokeLinejoin="round">
      <path d="M944 150C990 140 1020 122 1040 92L1072 205C1050 240 1010 260 975 262z" fill="url(#fil)" />
      <path d="M1072 205L1092 225L1062 258L975 262C1020 255 1050 235 1072 205z" fill="#9fb3b8" />
      <path d="M220 305L407 267L453 262L745 284L806 278L905 255L915 378L740 413Q705 422 680 419L470 404Q450 403 430 410L265 445z" fill="#4c5457" />
      <path d="M78 237L384 171Q400 166 437 167L729 188Q760 188 781 184L944 150L975 262L928 221L797 250Q770 255 745 254L453 229Q420 229 400 235L190 280L173 242z" fill="#c6dde3" />
      <path d="M190 280L400 235Q420 229 453 229L745 254Q770 255 797 250L928 221C905 235 895 250 893 262L806 278Q770 286 745 284L453 262Q425 262 407 267L228 305z" fill="#a9bcc1" />
      <path d="M453 229L745 254V284L453 262z" fill="#b6cbd0" />
      <path d="M384 171L407 267M437 167L455 262M729 188L745 254M781 184L806 278M745 254V284M944 150L975 262" />
      <path d="M893 262C895 245 905 232 928 221L993 456L955 495z" fill="url(#side)" />
      <path d="M973 262L1062 258L1310 206L1358 375L993 456L928 221z" fill="#c6dde3" stroke="none" />
      <path d="M928 221L993 456M975 262L1062 258L1310 206" />
      <path d="M970 258L933 225" stroke="#c6dde3" strokeWidth="1.800" />
      <path d="M1310 206C1345 195 1375 210 1387 235L1426 390C1400 375 1380 372 1358 375z" fill="url(#rnd)" />
      <path d="M952 497C955 470 970 462 993 456L1358 375C1400 368 1432 390 1430 420C1428 440 1412 450 1395 470L1000 560z" fill="#a8bbc0" />
      <path d="M952 497C960 480 975 462 993 456L995 489C980 492 978 505 978 510z" fill="#72868b" />
      <path d="M952 497L978 510L988 585Q968 582 965 568z" fill="#617278" />
      <path d="M978 510C980 495 985 491 995 489L1358 407C1400 402 1422 425 1408 455C1388 490 1370 510 1330 518L1010 590C990 590 988 585 985 570z" fill="#4c5457" />
      <path d="M1355 375L1359 405M1430 420L1412 450C1390 485 1375 500 1350 514" />
      <path d="M50 225C80 240 125 248 173 242L240 488C170 500 110 480 85 420z" fill="#c9e1e7" />
      <path d="M185 282C215 285 232 300 240 330L298 535L253 550z" fill="url(#rnd)" />
      <path d="M173 242L240 488L253 550" />
      <path d="M50 225L62 330L70 435C80 480 120 520 160 522C190 505 210 498 240 488C170 497 110 470 85 420z" fill="url(#foot)" />
      <path d="M240 488L250 518L-2 576V557L130 530L160 522C190 510 210 498 240 488z" fill="#c8e0e6" stroke="none" />
      <path d="M284 572L299 540L316 635Q315 660 292 674z" fill="#75888e" />
      <path d="M-2 576L247 519C275 514 295 520 299 542L284 572L253 550L-2 608z" fill="#a8bbc0" stroke="none" />
      <path d="M-2 608L253 550C275 548 283 560 284 575L297 655C297 668 285 675 270 680L-2 741z" fill="#4c5457" stroke="none" />
      <path d="M160 522C190 510 210 498 240 488M-2 576L247 519C275 514 295 520 299 542L284 572M-2 608L253 550C275 548 283 560 284 575L297 655C297 668 285 675 270 680L-2 741M297 655L315 635M247 519L253 550M240 488L247 519" />
      <g stroke="#3a5cff" strokeWidth="1.600"><path d="M50 225L405 149L750 175L1004 118L1095 0M209 192V208M252 163V198M231 183H272M861 151V165" /></g>
    </g>

    {/* base plate */}
    <g transform="translate(540 460) scale(.35714 .33333)" stroke="#24292a" strokeWidth=".9" strokeLinejoin="round">
      <path d="M262 1315L932 1156L922 1100L1232 1026V1160L275 1388z" fill="#4c5457" stroke="none" />
      <path d="M262 1315L275 1389L1232 1160M932 1156L922 1100" />
      <path d="M187 1334L265 1318L276 1389L255 1391L197 1366z" fill="#515b5e" />
      <path d="M912 1050L1232 979V995L915 1068z" fill="#c8e0e6" stroke="none" />
      <path d="M915 1068L1232 994.500V1027L922 1100z" fill="#a8bbc0" stroke="none" />
      <path d="M915 1068L1232 995M922 1100L1232 1026.500" />
      <path d="M90 978L845 800L850 828L165 992L122 1040L187 1334L178 1337z" fill="#dbc6d4" stroke="none" />
      <path d="M122 1040L180 1270L187 1334L130 1090z" fill="#7a6c79" />
      <path d="M165 992L850 828L925 1130L240 1292L180 1270L122 1040z" fill="#c8c4d6" />
      <path d="M240 1292L925 1130L932 1156L262 1315z" fill="#aea8b8" />
      <path d="M180 1270L240 1292L262 1315L187 1334z" fill="#675a66" />
      <ellipse cx="299" cy="1119" rx="54" ry="41" transform="rotate(-8 299 1119)" fill="url(#bore)" stroke="#3a5cff" strokeWidth="1.800" />
      <ellipse cx="720" cy="1018" rx="54" ry="41" transform="rotate(-8 720 1018)" fill="url(#bore)" stroke="#3a5cff" strokeWidth="1.800" />
      <path d="M932 1156V1140L948 1136L950 1152z" fill="#675a66" stroke="none" />

      {/* lug */}
      <path d="M1220 357L1248 349L1302 655L1283 645L1254 515z" fill="#d7bfce" stroke="none" />
      <path d="M775 330C790 240 880 150 1010 150C1100 150 1170 190 1190 250L1230 400L800 500z" fill="url(#cylL)" stroke="none" />
      <path d="M800 460L775 330C790 240 880 150 1010 150C1100 150 1170 190 1190 250L1216 350" />
      <path d="M790 457L1219 356L1256 520L1240 560L1000 560L850 630L835 620z" fill="url(#cylP)" stroke="none" />
      <path d="M1219 356L1256 520" />
      <path d="M790 457C800 520 820 580 835 622L905 1035L893 1072z" fill="#6c5f6b" />
      <path d="M905 1035L932 1048L915 1072L893 1072z" fill="#c5c0d1" stroke="none" />
      <path d="M835 622C825 520 910 400 1080 397C1180 397 1240 450 1255 520L1283 640L1310 845C1320 885 1345 905 1352 910V952L932 1048L905 1035z" fill="url(#bandP)" stroke="none" />
      <path d="M905 1035L835 622C825 520 910 400 1080 397C1180 397 1240 450 1255 520L1310 845C1320 885 1345 905 1352 908" />
      <path d="M835 622L860 628L932 1048L905 1035z" fill="#655965" />
      <path d="M1240 535L1255 518L1310 845L1297 858z" fill="#8b8190" />
      <path d="M860 628C850 540 910 432 1080 428C1180 430 1230 490 1240 535L1297 858C1302 905 1325 925 1350 940L1352 952L940 1048L932 1048z" fill="#675766" />
      <ellipse cx="1050" cy="583" rx="70" ry="56" transform="rotate(-10 1050 583)" fill="url(#boreP)" />

      <g stroke="#d95e93" strokeWidth="1.600"><path d="M912 1069L893 1072L790 457L1248 349L1352 952M845 800L90 978L178 1337L950 1154V1136" /></g>
      <g stroke="#3a5cff" strokeWidth="1.700">
        <path d="M127 1088L100 930L835 755M110 988L847 813L767 340C755 270 800 200 850 165C920 120 960 110 1020 110C1110 115 1180 170 1190 255" />
        <path d="M1030 583H1070M1050 564V604M13 1008H53M33 988V1028" />
      </g>
      <g stroke="#d5cfd2" strokeWidth="1.200"><path d="M955 155L1010 410M770 332L975 283M960 193L845 217L881 394L996 368M960 193L996 368" /></g>
      <path d="M944 105L957 140L950 145L942 140z" fill="#5e3a3a" stroke="none" />
      <path d="M748 334L790 321V333z" fill="#e8e8e8" stroke="none" /><path d="M748 334L772 327V335z" fill="#8a5a5a" stroke="none" />
      <path d="M1002 412L1015 410L1015 446z" fill="#f0f0f0" stroke="none" />
    </g>
    <g className="font-['Open_Sans'] font-normal" fontSize="13"><text x="872" y="495" fill="#8a5252">Y</text><text x="796" y="578" fill="#8a5252">Z</text><text x="900" y="618" fill="#e0e0e0">X</text></g>

    {/* view triad */}
    <path d="M431 922L455 914L462 949L439 955z" fill="#c9cacb" stroke="#9b9c9d" strokeWidth=".8" />
    <path d="M455 922L458 936M458 936L465 950" stroke="#a88" strokeWidth="1.200" /><path d="M462 950L468 962L468 949z" fill="#c8201c" />
    <path d="M455 912L459 936" stroke="#7a9a80" strokeWidth="1" /><path d="M454 902L458 914H452z" fill="#1f6a34" />
    <path d="M426 940L445 937" stroke="#9ab0e0" strokeWidth="1.500" /><path d="M418 941L433 937V942z" fill="#1a3ee0" />
    <g className="font-['Open_Sans'] font-normal" fontSize="12"><text x="449" y="903" fill="#2a7a3a">Y</text><text x="409" y="947" fill="#2244e0">Z</text><text x="463" y="968" fill="#d22">X</text></g>
  </svg>
);

const Viewport = () => (
  <div className="flex w-[1525px] flex-col border-l border-[#8f9497]">
    <div className="flex h-[25px] shrink-0 border-b-2 border-[#56a0b9]">
      <div className="flex w-[186px] items-center bg-[#56a0b9] pl-[7px] text-[15px] whitespace-nowrap text-white">
        <Ic s={14} vb={14}><path d="M1 3L5 1L7 2V8L12 6L13 8V11L6 14L1 11z" fill="#2456d8" stroke="#0c2a90" /><path d="M5 1V9L12 6" stroke="#a8c4f8" /></Ic>
        <span className="ml-[5px] text-[15px] leading-[22px]">NX12鉸鍊修改版.prt</span>
        <span className="mr-[7px] ml-auto"><Ic s={9} vb={9}><path d="M1 1L8 8M8 1L1 8" stroke="#fff" strokeWidth="2.200" /></Ic></span>
      </div>
    </div>
    <div className="relative flex-1 bg-linear-to-b from-[#b4b5b7] to-[#e7e8ea] to-75%">
      <Model />
      <div className="absolute top-[58px] left-[108px] text-[79.500px] leading-[115px] whitespace-nowrap text-[#ed1c24]">修改後的鉸鏈</div>
    </div>
  </div>
);

/* ---------- taskbar ---------- */
const T = ({ children, dot, active }: Kids & { dot?: boolean; active?: boolean }) => (
  <div className={`relative flex h-[50px] w-[49px] shrink-0 items-center justify-center rounded-[4px] ${active ? "border border-[#33454e] bg-[#22343e]" : ""}`}>
    {children}
    {dot && <div className="absolute bottom-0 h-[4px] w-[8px] rounded-full bg-[#9ba3a7]" />}
    {active && <div className="absolute bottom-0 h-[4px] w-[20px] rounded-full bg-[#4cc2ff]" />}
  </div>
);
const Taskbar = () => (
  <div className="flex h-[60px] items-center bg-[linear-gradient(90deg,#142b38_0%,#142b36_32%,#15292c_50%,#1e2426_72%,#13273a_81%,#132936_100%)] font-normal text-white">
    <div className="flex w-[606px] items-center pl-[25px]">
      <Ic s={32} vb={32}><path d="M1 17C3 8 10 5 14 6C21 7 25 12 26 18L20 16L14 18L8 16z" fill="#5ab0f4" transform="rotate(5 14 12)" /><path d="M14 17V27C14 31 9 31 10 27" stroke="#8a8f94" strokeWidth="2.200" /><path d="M17 3L15 6M23 2L21 5M29 6L27 9M25 8L23 11M30 12L28 15" stroke="#2f9df0" strokeWidth="2" /></Ic>
      <div className="ml-[8px] text-[14.500px] leading-[20px]"><div className="-mt-px">27°C</div><div className="text-[14.800px] font-light text-[#d5dade]">正在下雨</div></div>
    </div>
    <div className="flex w-[715px] shrink-0 gap-[6px]">
      <T><Ic s={30} vb={30}><path d="M1 1H14V14H1zM15.500 1H29V14H15.500zM1 15.500H14V29H1zM15.500 15.500H29V29H15.500z" fill="#3fbcfb" /><path d="M1 1H14V14H1z" fill="#7ad6fd" /><path d="M15.500 15.500H29V29H15.500z" fill="#1da4f8" /></Ic></T>
      <T><Ic s={28} vb={28}><circle cx="16" cy="12" r="10" fill="#3a4a54" stroke="#e8ecee" strokeWidth="2.800" /><path d="M9 19L2 26" stroke="#e8ecee" strokeWidth="3" /></Ic></T>
      <T><Ic s={30} vb={30}><path d="M8 1H30V21H8z" fill="#f2f2f2" /><path d="M0 9H22V28H0z" fill="#6a6a6a" /><path d="M8 9H22V21H8z" fill="#b5b5b5" /></Ic></T>
      <T><Ic s={30} vb={30}><circle cx="15" cy="15" r="14" fill="#6f63d2" /><path d="M1 16V29H14z" fill="#5a55c8" /><rect x="6" y="9" width="12" height="12" rx="2" fill="#fff" /><path d="M19 13L24 9V21L19 17z" fill="#fff" /></Ic></T>
      <T dot><Ic s={30} vb={30}><path d="M0 2H10L13 6H0z" fill="#d99a10" /><path d="M0 6H30V28H0z" fill="#ffcf48" /><path d="M5 20H25V28H5z" fill="#1478d0" /><path d="M9 24H21" stroke="#0b4f94" strokeWidth="2" /></Ic></T>
      <T dot><Ic s={28} vb={28}><circle cx="14" cy="14" r="14" fill="#fbc116" /><path d="M14 14L1.900 7A14 14 0 0 1 26.100 7z" fill="#e33b2e" /><path d="M14 14L1.900 7A14 14 0 0 0 14 28L20 17z" fill="#2da44e" /><path d="M14 7.500H26.400A14 14 0 0 0 2 7L8.500 17.500z" fill="#e33b2e" /><circle cx="14" cy="14" r="6.500" fill="#fff" /><circle cx="14" cy="14" r="5.200" fill="#2f7de8" /></Ic></T>
      <T><Ic s={30} vb={30}><path d="M0 11L15 0L30 11V28H0z" fill="#1372c8" /><path d="M3 10H27V20H3z" fill="#eef4fa" /><path d="M0 11L15 21L30 11V28H0z" fill="#35aef0" /><path d="M0 28L18 17L30 28z" fill="#1e90dc" /></Ic>
        <div className="absolute top-px right-[2px] flex size-[24px] items-center justify-center rounded-full bg-[#4cc2ff] text-[14px] text-black">16</div></T>
      <T><Ic s={30} vb={30}><rect width="30" height="30" rx="5" fill="#35c6f0" /><path d="M15 4L25 9.500V20.500L15 26L5 20.500V9.500z" stroke="#fff" strokeWidth="1.500" /><path d="M12 10V20M19 10L13 15L19 20" stroke="#fff" strokeWidth="2.200" /><path d="M20 1L28 9M24 1L29 6" stroke="#bdeefc" /></Ic></T>
      <T><Ic s={30} vb={30}><path d="M7 1H29V28H7z" fill="#2b7cd3" /><path d="M7 1H29V8H7z" fill="#41a5ee" /><path d="M7 15H29V21H7z" fill="#185abd" /><path d="M7 21H29V28H7z" fill="#103f91" /><rect y="7" width="16" height="16" rx="1.500" fill="#185abd" /><path d="M3 11L5.500 19L8 12L10.500 19L13 11" stroke="#fff" strokeWidth="1.800" /></Ic></T>
      <T><Ic s={30} vb={30}><circle cx="15" cy="15" r="14.500" fill="#5865f2" /><path d="M9 9C13 7.500 17 7.500 21 9C23.500 13 24 16 24 20C22 21.500 20 22 19 22L18 20H12L11 22C10 22 8 21.500 6 20C6 16 6.500 13 9 9z" fill="#fff" /><ellipse cx="11.700" cy="15.500" rx="1.900" ry="2.200" fill="#5865f2" /><ellipse cx="18.300" cy="15.500" rx="1.900" ry="2.200" fill="#5865f2" /></Ic></T>
      <T><Ic s={28} vb={28}><rect width="28" height="28" rx="7" fill="#4088f8" /><rect x="5" y="9" width="12" height="10" rx="2" fill="#fff" /><path d="M18 12L23 9V19L18 16z" fill="#fff" /></Ic></T>
      <T dot><div className="relative flex size-[30px] items-center justify-center rounded-[5px] bg-[#06b906]"><Ic s={26} vb={26}><path d="M13 2C20 2 24 6 24 11C24 17 18 20 13 25V20C6 20 2 16 2 11S6 2 13 2z" fill="#fff" /></Ic><span className="absolute top-[9px] text-[8px] leading-[9px] font-extrabold text-[#06b906]">LINE</span></div></T>
      <T active><Ic s={30} vb={30}><circle cx="15" cy="16" r="11" fill="#28b4e4" /><path d="M7 12C11 10 13 15 12 20L15 26C9 27 4 22 5 15z" fill="#4fe05c" /><path d="M18 6C25 8 28 16 24 22L17 17z" fill="#1b55d0" /><path d="M2 1L17 1L13 14z" fill="#c8142c" /><path d="M2 1L11 4L13 14z" fill="#e8485c" /><path d="M27 6C33 16 18 27 2 28M2 28L8 23M2 28L9 30" stroke="#f6b02c" strokeWidth="2.300" /></Ic></T>
    </div>
    <div className="ml-auto flex h-full items-center">
      <Slot w="w-[30px]"><Ic s={16} vb={14}><path d="M1 10L7 4L13 10" stroke="#fff" strokeWidth="1.200" /></Ic></Slot>
      <Slot w="w-[29px]"><Ic s={21} vb={21}><path d="M5 17C0 17 0 11 4 10C5 4 12 4 14 8C20 8 22 17 17 17z" fill="#b8bdc2" /><path d="M4 17C3 13 10 10 14 12C20 11 23 17 18 17z" fill="#fff" /></Ic></Slot>
      <Slot w="w-[41px]" cls="text-[19px]">英</Slot>
      <Slot w="w-[38px]"><Ic s={20} vb={20}><path d="M1 8C6 3 14 3 19 8M4 11C7.500 7.500 12.500 7.500 16 11M7 14C9 12 11 12 13 14" stroke="#fff" strokeWidth="1.700" /><circle cx="10" cy="16.500" r="1.700" fill="#fff" /></Ic></Slot>
      <Slot w="w-[24px]"><Ic s={20} vb={20}><path d="M1 8H4L9 4V16L4 12H1z" stroke="#fff" strokeWidth="1.300" /><path d="M11.500 7C13 9 13 11 11.500 13" stroke="#fff" strokeWidth="1.300" /><path d="M14 5C17 8 17 12 14 15M16.500 3C20 7 20 13 16.500 17" stroke="#71808a" strokeWidth="1.200" /></Ic></Slot>
      <Slot w="w-[38px]"><Ic s={20} vb={20}><path d="M5 7V15H17V6H8" stroke="#fff" strokeWidth="1.600" /><path d="M9 8H15V13H9zM18 8H20V13H18zM1 4H7V8C7 10 1 10 1 8zM2 1V4M6 1V4M4 9V15" fill="#fff" stroke="#fff" strokeWidth="1" /></Ic></Slot>
      <div className="w-[78px] text-right text-[14.400px] leading-[20px]"><div>下午 05:01</div><div>2022/6/25</div></div>
      <div className="mr-[23px] ml-[13px] flex size-[24px] items-center justify-center rounded-full bg-[#4cc2ff] text-[14px] text-[#0b2230]">23</div>
    </div>
  </div>
);

export default function App() {
  return (
    <div className="flex h-[1080px] w-[1920px] flex-col overflow-hidden bg-white font-['Noto_Sans','Noto_Sans_CJK_TC',sans-serif] font-[350] text-[#1c1c1c]">
      <TitleBar />
      <TabBar />
      <Ribbon />
      <SelBar />
      <div className="flex h-[805px] border-b-2 border-[#a5a8aa]">
        <ResourceBar />
        <Navigator />
        <Viewport />
      </div>
      <div className="flex h-[21px] items-center justify-end gap-[4px] pr-[55px]">
        <div className="flex h-[16px] w-[16px] items-center justify-center border border-[#bbb] bg-[#dcdcdc]"><Ic s={12} vb={12}><path d="M2 11V2L5 1L7 3L10 2V7L7 8L5 6L2 7" stroke="#999" /></Ic></div>
        <FullIcon />
      </div>
      <Taskbar />
    </div>
  );
}
